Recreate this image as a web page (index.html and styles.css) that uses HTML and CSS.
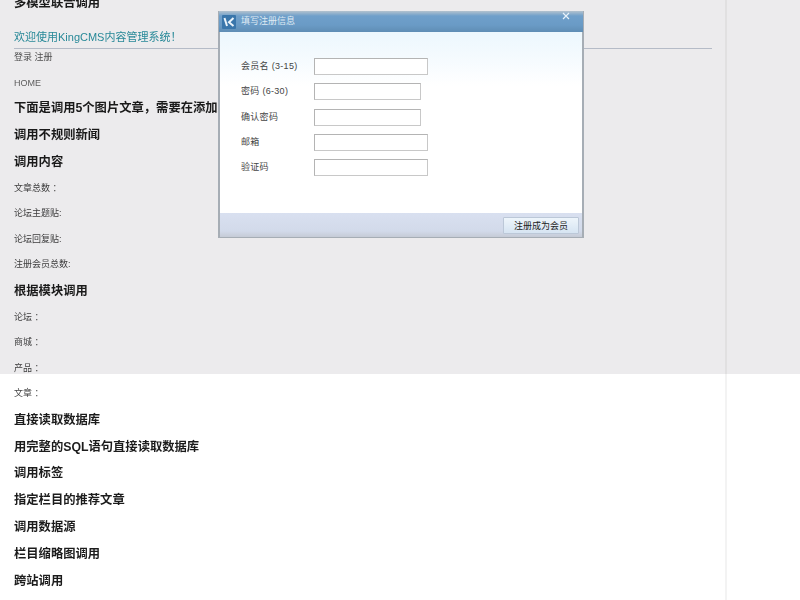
FILE: index.html
```html
<!DOCTYPE html>
<html lang="zh-CN">
<head>
<meta charset="utf-8">
<title>KingCMS</title>
<link rel="stylesheet" href="styles.css">
</head>
<body>
<div class="screen">
  <main class="page">
    <h3 class="head">多模型联合调用</h3>
    <h2 class="welcome">欢迎使用KingCMS内容管理系统！</h2>
    <p class="login">登录 注册</p>
    <p class="home">HOME</p>
    <h3 class="head clip">下面是调用5个图片文章，需要在添加文章时上传缩略图</h3>
    <h3 class="head">调用不规则新闻</h3>
    <h3 class="head">调用内容</h3>
    <p class="row">文章总数 ：</p>
    <p class="row">论坛主题贴:</p>
    <p class="row">论坛回复贴:</p>
    <p class="row">注册会员总数:</p>
    <h3 class="head">根据模块调用</h3>
    <p class="row">论坛 ：</p>
    <p class="row">商城 ：</p>
    <p class="row">产品 ：</p>
    <p class="row">文章 ：</p>
    <h3 class="head">直接读取数据库</h3>
    <h3 class="head">用完整的SQL语句直接读取数据库</h3>
    <h3 class="head">调用标签</h3>
    <h3 class="head">指定栏目的推荐文章</h3>
    <h3 class="head">调用数据源</h3>
    <h3 class="head">栏目缩略图调用</h3>
    <h3 class="head">跨站调用</h3>
    <h3 class="head last">其他调用方法</h3>
  </main>
  <div class="overlay"></div>
  <section class="dialog">
    <header class="titlebar">
      <svg class="logo" viewBox="0 0 14 14" width="14" height="14" aria-hidden="true">
        <rect width="14" height="14" rx="1" fill="#3a76ab"/>
        <path d="M2.5 3 5 11 M11.5 3 7 7.2 11.5 11" fill="none" stroke="#eaf3fa" stroke-width="2"/>
      </svg>
      <span class="title">填写注册信息</span>
      <svg class="close" viewBox="0 0 8 8" width="8" height="8" aria-hidden="true">
        <path d="M1 1 7 7 M7 1 1 7" stroke="#e8f2fa" stroke-width="1.2"/>
      </svg>
    </header>
    <form class="form">
      <label class="label">会员名 (3-15)</label><input class="input" type="text">
      <label class="label">密码 (6-30)</label><input class="input short" type="text">
      <label class="label">确认密码</label><input class="input short" type="text">
      <label class="label">邮箱</label><input class="input" type="text">
      <label class="label">验证码</label><input class="input" type="text">
    </form>
    <footer class="foot">
      <button class="submit" type="button">注册成为会员</button>
    </footer>
  </section>
</div>
</body>
</html>
```
FILE: styles.css
```css
* { box-sizing: border-box; }
html, body { margin: 0; height: 100%; overflow: hidden; background: #fff; }
.screen {
  position: relative;
  width: 800px;
  height: 600px;
  overflow: hidden;
  filter: blur(0.6px);
  font-family: "Liberation Sans", "Noto Sans CJK SC", sans-serif;
}
.page {
  width: 727px;
  height: 620px;
  margin-top: -10px;
  padding-left: 14px;
  border-right: 2px solid #f3f3f3;
  color: #222;
}
.head, .welcome, .login, .home, .row { margin: 0; font-weight: 400; white-space: nowrap; }
.head {
  height: 26.85px;
  line-height: 26.85px;
  font-size: 12.3px;
  font-weight: 700;
  color: #1c1c1c;
}
.clip { width: 204px; overflow: hidden; }
.welcome {
  width: 698px;
  height: 23.5px;
  margin-top: 9px;
  padding-top: 2px;
  line-height: 18px;
  font-size: 11px;
  color: #2b95a4;
  border-bottom: 1.5px solid #c4cbd6;
}
.login {
  height: 14px;
  line-height: 14px;
  margin-top: 0.5px;
  font-size: 9px;
  color: #555;
}
.home {
  height: 20px;
  line-height: 20px;
  margin: 9px 0 2.5px;
  font-size: 9px;
  color: #666;
}
.row {
  height: 25.5px;
  line-height: 25.5px;
  font-size: 9px;
  color: #444;
}
.last { color: #999; }
.overlay {
  position: absolute;
  left: 0;
  top: 0;
  width: 800px;
  height: 374px;
  background: #ecebed;
  mix-blend-mode: multiply;
}
.dialog {
  position: absolute;
  left: 218px;
  top: 11px;
  width: 366px;
  height: 227px;
  display: flex;
  flex-direction: column;
  background: linear-gradient(#e6f5fd, #f4fafe 45px, #fff 75px);
  border: 1px solid #a6adb5;
  border-top: 0;
  border-left-width: 2px;
  border-right-width: 2px;
}
.titlebar {
  position: relative;
  height: 21px;
  flex: none;
  display: flex;
  align-items: center;
  gap: 5px;
  padding-left: 3px;
  margin: 0 -1px;
  background: linear-gradient(#b3c2ce, #6f9fca 5px, #6a9bc6 14px, #5f8db4);
}
.logo { flex: none; }
.title { padding-bottom: 2px; font-size: 9px; color: #dfeaf3; }
.close { position: absolute; right: 13px; top: 1px; }
.form {
  flex: 1;
  display: grid;
  grid-template-columns: 73px 1fr;
  grid-auto-rows: 17px;
  row-gap: 8.3px;
  align-items: center;
  align-content: start;
  justify-items: start;
  padding: 26px 0 0 21px;
}
.label {
  padding-bottom: 2px;
  font-size: 9px;
  letter-spacing: 0.3px;
  color: #444;
  white-space: nowrap;
}
.input {
  width: 114px;
  height: 17px;
  padding: 0;
  background: #fff;
  border: 1px solid #c8c8c8;
  border-top-color: #b4b4b4;
  border-left-color: #b4b4b4;
  border-radius: 0;
  outline: 0;
}
.short { width: 107px; }
.foot {
  height: 24px;
  flex: none;
  display: flex;
  justify-content: flex-end;
  align-items: center;
  padding-right: 3px;
  background: linear-gradient(#d9e0f0, #d2daea 18px, #c5cbd6);
}
.submit {
  width: 76px;
  height: 17px;
  padding: 0;
  font: 9px "Liberation Sans", "Noto Sans CJK SC", sans-serif;
  color: #222;
  background: linear-gradient(#eef5fb, #d6e4f2);
  border: 1px solid #bcc8d8;
  border-radius: 1px;
}
```
